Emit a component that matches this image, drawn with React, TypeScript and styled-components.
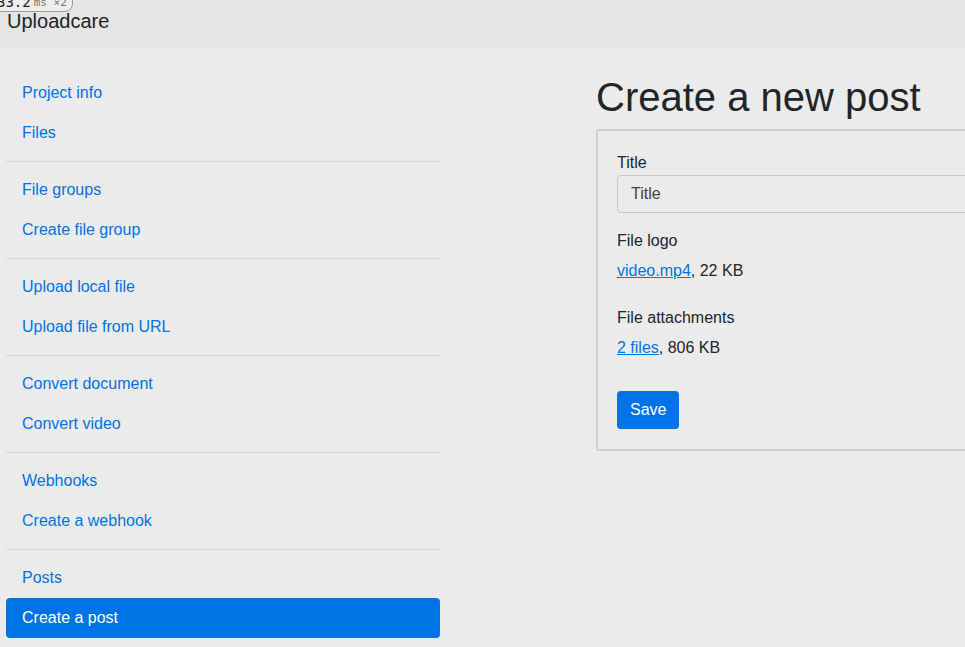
import React, { useState } from 'react'
import styled, { createGlobalStyle } from 'styled-components'

const GlobalStyle = createGlobalStyle`
  html, body {
    margin: 0;
    padding: 0;
    background: #ebebeb;
    font-family: "Liberation Sans", Arial, sans-serif;
    font-size: 16px;
    color: #212529;
  }
  * {
    box-sizing: border-box;
  }
`

const blue = '#0073e6'

const Timing = styled.div`
  position: absolute;
  left: -12px;
  top: -9px;
  height: 21px;
  padding: 0 5px 0 8px;
  border: 1px solid #9a9a9a;
  border-radius: 0 0 8px 0;
  background: #eeeeee;
  display: flex;
  align-items: flex-end;
  gap: 3px;
  font-family: "DejaVu Sans Mono", monospace;
  line-height: 17px;
  color: #222;
  font-size: 14px;
  z-index: 10;
`

const TimingUnit = styled.span`
  font-size: 11px;
  color: #777;
`

const Header = styled.header`
  height: 48px;
  background: #e4e5e6;
  padding: 9px 0 0 7px;
  font-size: 20px;
  line-height: 24px;
  color: #222;
`

const Layout = styled.div`
  display: grid;
  grid-template-columns: 434px 1fr;
  column-gap: 156px;
  padding: 25px 0 0 6px;
  overflow: hidden;
`

const Sidebar = styled.nav`
  display: flex;
  flex-direction: column;
`

const Divider = styled.hr`
  border: 0;
  border-top: 1px solid #d6d6d6;
  margin: 8px 0;
`

const NavItem = styled.a<{ $active?: boolean }>`
  display: block;
  height: 40px;
  line-height: 40px;
  padding-left: 16px;
  border-radius: 4px;
  text-decoration: none;
  cursor: pointer;
  color: ${(p) => (p.$active ? '#fff' : blue)};
  background: ${(p) => (p.$active ? blue : 'transparent')};
`

const Main = styled.main`
  min-width: 0;
`

const Heading = styled.h1`
  margin: 0 0 8px;
  font-size: 40px;
  line-height: 48px;
  font-weight: 400;
  color: #212529;
`

const Card = styled.form`
  width: 420px;
  border: 2px solid #cfcfcf;
  border-radius: 3px;
  padding: 20px 20px 20px 19px;
`

const Label = styled.label`
  display: block;
  line-height: 24px;
`

const Input = styled.input`
  display: block;
  width: 100%;
  height: 38px;
  padding: 0 13px;
  border: 1px solid #c4c8cc;
  border-radius: 4px;
  background: transparent;
  font-family: inherit;
  font-size: 16px;
  color: #444;
  margin-bottom: 16px;
  outline: none;
`

const FieldTitle = styled.div`
  line-height: 24px;
  margin-bottom: 6px;
`

const FileInfo = styled.div`
  line-height: 24px;
  margin-bottom: 23px;
`

const FileLink = styled.a`
  color: ${blue};
  text-decoration: underline;
  cursor: pointer;
`

const SaveButton = styled.button`
  margin-top: 8px;
  height: 38px;
  padding: 0 13px;
  border: 0;
  border-radius: 4px;
  background: ${blue};
  color: #fff;
  font-family: inherit;
  font-size: 16px;
  cursor: pointer;
`

const groups = [
  ['Project info', 'Files'],
  ['File groups', 'Create file group'],
  ['Upload local file', 'Upload file from URL'],
  ['Convert document', 'Convert video'],
  ['Webhooks', 'Create a webhook'],
  ['Posts', 'Create a post'],
]

const App = () => {
  const [title, setTitle] = useState('Title')
  const active = 'Create a post'

  return (
    <>
      <GlobalStyle />
      <Timing>
        33.2<TimingUnit>ms ×2</TimingUnit>
      </Timing>
      <Header>Uploadcare</Header>
      <Layout>
        <Sidebar>
          {groups.map((group, i) => (
            <React.Fragment key={i}>
              {i > 0 && <Divider />}
              {group.map((item) => (
                <NavItem key={item} $active={item === active}>
                  {item}
                </NavItem>
              ))}
            </React.Fragment>
          ))}
        </Sidebar>
        <Main>
          <Heading>Create a new post</Heading>
          <Card onSubmit={(e) => e.preventDefault()}>
            <Label htmlFor="title">Title</Label>
            <Input id="title" value={title} onChange={(e) => setTitle(e.target.value)} />
            <FieldTitle>File logo</FieldTitle>
            <FileInfo>
              <FileLink>video.mp4</FileLink>, 22 KB
            </FileInfo>
            <FieldTitle>File attachments</FieldTitle>
            <FileInfo>
              <FileLink>2 files</FileLink>, 806 KB
            </FileInfo>
            <SaveButton type="submit">Save</SaveButton>
          </Card>
        </Main>
      </Layout>
    </>
  )
}

export default App
